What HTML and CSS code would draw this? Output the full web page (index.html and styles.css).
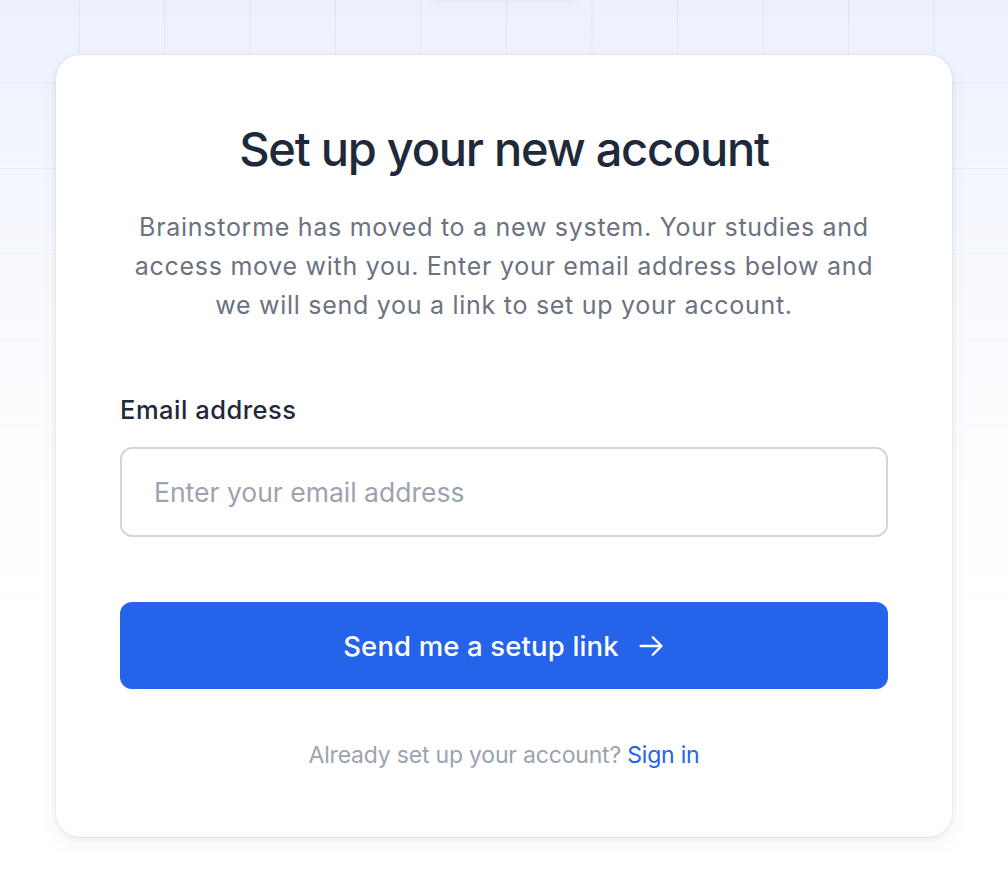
FILE: index.html
```html
<!DOCTYPE html>
<html lang="en">
<head>
<meta charset="utf-8">
<title>Set up your new account</title>
<link rel="stylesheet" href="styles.css">
</head>
<body>
<div class="page">
  <div class="logo-chip"></div>
  <main class="card">
    <h1 class="title">Set up your new account</h1>
    <p class="lead">Brainstorme has moved to a new system. Your studies and access move with you. Enter your email address below and we will send you a link to set up your account.</p>
    <form class="form">
      <label class="label" for="email">Email address</label>
      <input class="input" id="email" type="email" placeholder="Enter your email address">
      <button class="button" type="button">
        <span>Send me a setup link</span>
        <svg class="arrow" viewBox="0 0 24 24" fill="none" stroke="currentColor" stroke-width="2" stroke-linecap="round" stroke-linejoin="round" aria-hidden="true"><path d="M13.5 4.5 21 12m0 0-7.5 7.5M21 12H3"/></svg>
      </button>
    </form>
    <p class="footer">Already set up your account? <a class="link" href="#">Sign in</a></p>
  </main>
</div>
</body>
</html>
```

FILE: styles.css
```css
* { box-sizing: border-box; }

html, body {
  margin: 0;
  padding: 0;
}

body {
  min-height: 892px;
  font-family: Inter, "Liberation Sans", sans-serif;
  background-color: #ffffff;
  background-image:
    linear-gradient(to bottom, rgba(255,255,255,0) 0px, rgba(255,255,255,0.55) 260px, rgba(255,255,255,0.92) 520px, #ffffff 860px),
    linear-gradient(to right, rgba(200,210,230,0.45) 1px, transparent 1px),
    linear-gradient(to bottom, rgba(200,210,230,0.45) 1px, transparent 1px),
    linear-gradient(to bottom, #ecf1fd 0px, #edf2fd 300px, #f6f8fe 600px, #ffffff 892px);
  background-size: 100% 100%, 85.5px 85.5px, 85.5px 85.5px, 100% 100%;
  background-position: 0 0, -7px -3px, -7px -3px, 0 0;
  background-repeat: no-repeat, repeat, repeat, no-repeat;
}

.page {
  display: flex;
  flex-direction: column;
  align-items: center;
  padding-bottom: 55px;
}

.logo-chip {
  width: 154px;
  height: 48px;
  margin-top: -51px;
  border-radius: 12px;
  background: #ffffff;
  box-shadow: 0 2px 8px rgba(30, 41, 80, 0.10);
}

.card {
  width: 896px;
  margin-top: 58px;
  padding: 66px 64px 66px;
  background: #ffffff;
  border-radius: 24px;
  box-shadow: 0 0 0 1px rgba(30, 41, 80, 0.04), 0 2px 6px rgba(0, 0, 0, 0.07), 0 8px 24px rgba(30, 41, 80, 0.04);
  text-align: center;
}

.title {
  margin: 0;
  font-size: 47px;
  line-height: 56px;
  font-weight: 500;
  letter-spacing: -1.25px;
  color: #1e2939;
}

.lead {
  margin: 31px 0 0;
  font-size: 25px;
  line-height: 39px;
  letter-spacing: 0.72px;
  color: #6b7280;
}

.form {
  margin-top: 67px;
  display: flex;
  flex-direction: column;
  text-align: left;
}

.label {
  font-size: 25.5px;
  line-height: 36px;
  font-weight: 500;
  letter-spacing: 0.5px;
  color: #1e2939;
}

.input {
  margin-top: 19px;
  height: 90px;
  width: 100%;
  padding: 0 32px;
  border: 2px solid #d3d6dc;
  border-radius: 12px;
  font-family: inherit;
  font-size: 26.5px;
  color: #1e2939;
  background: #ffffff;
  outline: none;
}

.input::placeholder {
  color: #9ca3af;
  opacity: 1;
}

.button {
  margin-top: 65px;
  height: 87px;
  width: 100%;
  display: flex;
  align-items: center;
  justify-content: center;
  gap: 18px;
  border: 0;
  border-radius: 12px;
  background: #2563eb;
  color: #ffffff;
  font-family: inherit;
  font-size: 27.5px;
  font-weight: 500;
  letter-spacing: 0.15px;
  cursor: pointer;
}

.arrow {
  width: 28px;
  height: 28px;
  display: block;
}

.footer {
  margin: 50px 0 0;
  font-size: 23px;
  line-height: 32px;
  letter-spacing: -0.2px;
  color: #9ca3af;
}

.link {
  color: #2563eb;
  text-decoration: none;
}
```
